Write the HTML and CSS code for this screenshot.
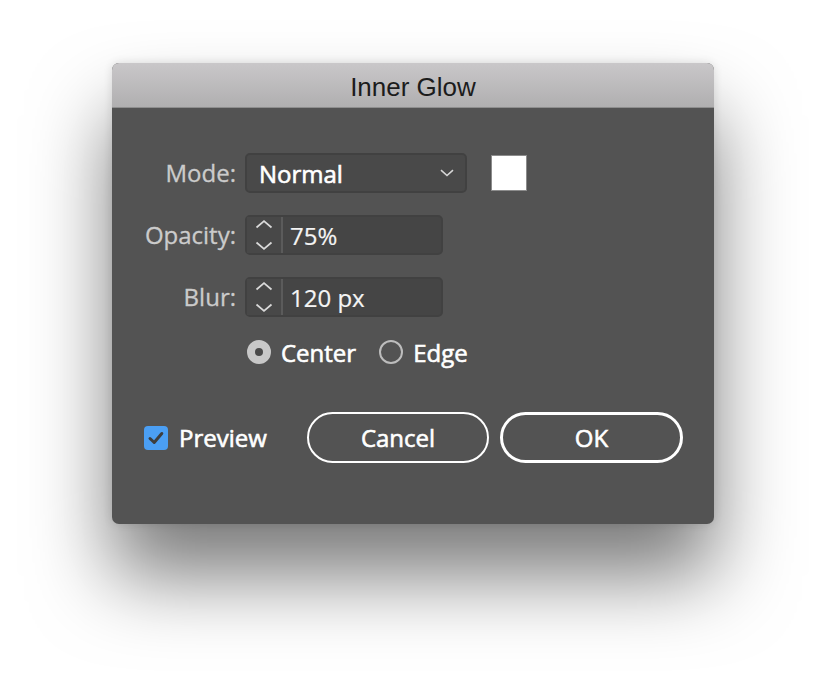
FILE: index.html
```html
<!DOCTYPE html>
<html>
<head>
<meta charset="utf-8">
<link rel="stylesheet" href="styles.css">
</head>
<body>
<div class="page">
  <div class="dialog">
    <div class="titlebar">Inner Glow</div>
    <div class="content">
      <div class="form">
        <div class="lbl">Mode:</div>
        <div class="ctl">
          <div class="select">
            <span class="select-value">Normal</span>
            <svg class="chev" width="14" height="8" viewBox="0 0 14 8"><path d="M1 1.2 L7 6.5 L13 1.2" fill="none" stroke="#d6d6d6" stroke-width="1.6"/></svg>
          </div>
          <div class="swatch"></div>
        </div>

        <div class="lbl">Opacity:</div>
        <div class="ctl">
          <div class="field">
            <div class="stepper">
              <svg width="18" height="32" viewBox="0 0 18 32"><path d="M1.5 8.5 L9 2 L16.5 8.5" fill="none" stroke="#dadada" stroke-width="1.7"/><path d="M1.5 23.5 L9 30 L16.5 23.5" fill="none" stroke="#dadada" stroke-width="1.7"/></svg>
            </div>
            <div class="value">75%</div>
          </div>
        </div>

        <div class="lbl">Blur:</div>
        <div class="ctl">
          <div class="field">
            <div class="stepper">
              <svg width="18" height="32" viewBox="0 0 18 32"><path d="M1.5 8.5 L9 2 L16.5 8.5" fill="none" stroke="#dadada" stroke-width="1.7"/><path d="M1.5 23.5 L9 30 L16.5 23.5" fill="none" stroke="#dadada" stroke-width="1.7"/></svg>
            </div>
            <div class="value">120 px</div>
          </div>
        </div>

        <div class="lbl"></div>
        <div class="ctl radios">
          <div class="radio-item"><span class="radio checked"></span><span class="radio-text">Center</span></div>
          <div class="radio-item"><span class="radio"></span><span class="radio-text">Edge</span></div>
        </div>
      </div>

      <div class="actions">
        <div class="check">
          <span class="checkbox">
            <svg width="24" height="24" viewBox="0 0 24 24"><path d="M6 12.5 L10.2 16.5 L17.8 7.5" fill="none" stroke="#3e3e3e" stroke-width="3" stroke-linecap="round" stroke-linejoin="round"/></svg>
          </span>
          <span class="check-text">Preview</span>
        </div>
        <div class="buttons">
          <div class="btn">Cancel</div>
          <div class="btn btn-default">OK</div>
        </div>
      </div>
    </div>
  </div>
</div>
</body>
</html>
```

FILE: styles.css
```css
html, body {
  margin: 0;
  padding: 0;
  background: #ffffff;
}

.page {
  padding: 63px 0 0 112px;
  width: 826px;
  height: 684px;
  box-sizing: border-box;
  overflow: hidden;
}

.dialog {
  width: 602px;
  height: 461px;
  border-radius: 7px;
  background: #535353;
  overflow: hidden;
  box-shadow: 0 52px 80px rgba(0, 0, 0, 0.52), 0 0 10px rgba(0, 0, 0, 0.12);
  display: flex;
  flex-direction: column;
}

.titlebar {
  height: 40px;
  border-top: 1px solid #d6d5d6;
  border-bottom: 1px solid #8e8e8e;
  box-sizing: content-box;
  margin-top: -1px;
  background: linear-gradient(#c9c7c9, #b0afb0);
  display: flex;
  align-items: center;
  justify-content: center;
  font-family: "Liberation Sans", Arial, sans-serif;
  font-size: 26px;
  color: #1c1c1c;
  padding-top: 4px;
}

.content {
  padding-top: 45px;
  font-family: "Open Sans", "Noto Sans", sans-serif;
  font-size: 24px;
}

.form {
  display: grid;
  grid-template-columns: 124px auto;
  column-gap: 9px;
  row-gap: 22px;
  align-items: center;
}

.lbl {
  text-align: right;
  color: #cbcbcb;
  font-weight: 400;
  line-height: 40px;
  -webkit-text-stroke: 0.3px #cbcbcb;
}

.ctl {
  display: flex;
  align-items: center;
}

.select {
  width: 222px;
  height: 40px;
  box-sizing: border-box;
  border: 2px solid #414141;
  border-radius: 5px;
  background: #494949;
  display: flex;
  align-items: center;
  justify-content: space-between;
  padding: 0 11px 0 12px;
}

.select-value {
  color: #ffffff;
  -webkit-text-stroke: 0.6px #ffffff;
}

.chev {
  display: block;
}

.swatch {
  width: 36px;
  height: 36px;
  box-sizing: border-box;
  margin-left: 24px;
  background: #ffffff;
  border: 1px solid #8c8c8c;
}

.field {
  width: 198px;
  height: 40px;
  box-sizing: border-box;
  border: 2px solid #414141;
  border-radius: 5px;
  background: #454545;
  display: flex;
  align-items: stretch;
}

.stepper {
  width: 34px;
  border-right: 2px solid #5b5b5b;
  display: flex;
  align-items: center;
  justify-content: center;
  background: #484848;
}

.stepper svg {
  display: block;
}

.value {
  color: #f4f4f4;
  padding-left: 7px;
  display: flex;
  align-items: center;
  font-weight: 400;
  -webkit-text-stroke: 0.2px #f4f4f4;
}

.radios {
  margin-top: 1px;
  height: 24px;
  gap: 23px;
  padding-left: 2px;
}

.radio-item {
  display: flex;
  align-items: center;
  gap: 10px;
}

.radio {
  width: 24px;
  height: 24px;
  box-sizing: border-box;
  border-radius: 50%;
  border: 2px solid #bdbdbd;
  display: flex;
  align-items: center;
  justify-content: center;
}

.radio.checked {
  background: #c8c8c8;
  border-color: #c8c8c8;
}

.radio.checked::after {
  content: "";
  width: 8px;
  height: 8px;
  border-radius: 50%;
  background: #4a4a4a;
}

.radio-text {
  color: #ffffff;
  -webkit-text-stroke: 0.6px #ffffff;
}

.actions {
  margin-top: 48px;
  padding: 0 31px 0 32px;
  display: flex;
  align-items: center;
  justify-content: space-between;
}

.check {
  display: flex;
  align-items: center;
  gap: 11px;
}

.checkbox {
  width: 24px;
  height: 24px;
  border-radius: 4px;
  background: #4b9ff4;
  display: block;
}

.checkbox svg {
  display: block;
}

.check-text {
  color: #ffffff;
  -webkit-text-stroke: 0.6px #ffffff;
}

.buttons {
  display: flex;
  gap: 11px;
}

.btn {
  width: 182px;
  height: 51px;
  box-sizing: border-box;
  border: 2px solid #ffffff;
  border-radius: 26px;
  color: #ffffff;
  -webkit-text-stroke: 0.6px #ffffff;
  display: flex;
  align-items: center;
  justify-content: center;
}

.btn-default {
  width: 183px;
  border-width: 3px;
}
```
